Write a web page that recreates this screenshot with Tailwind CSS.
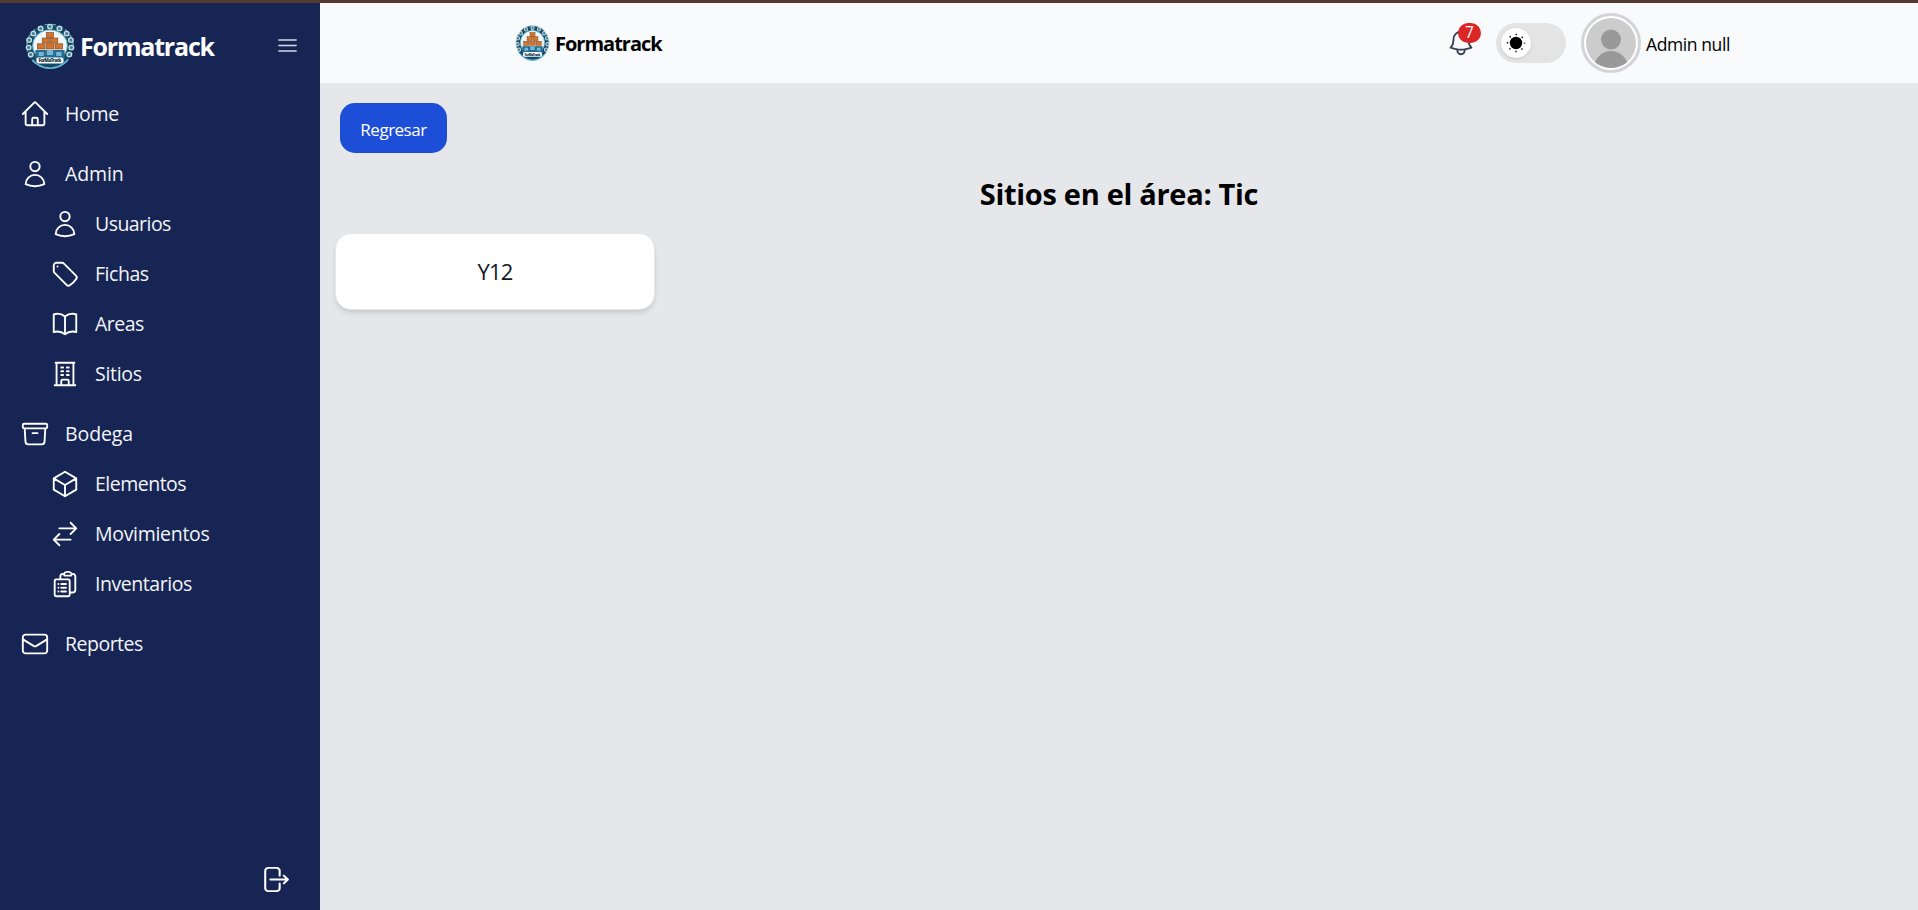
<!DOCTYPE html>
<html lang="es">
<head>
<meta charset="utf-8">
<title>Formatrack</title>
<script src="https://cdn.jsdelivr.net/npm/@tailwindcss/browser@4"></script>
</head>
<body class="h-[910px] overflow-hidden bg-[#e5e7eb] font-['Open_Sans','Noto_Sans',sans-serif] text-black">
<svg class="hidden">
  <defs>
    <symbol id="logo" viewBox="0 0 48 46" preserveAspectRatio="none">
      <ellipse cx="24" cy="23" rx="22.500" ry="22" fill="#174a61"/>
      <ellipse cx="24" cy="23" rx="22.300" ry="21.800" fill="none" stroke="#5fa9c8" stroke-width="1.200" stroke-dasharray="4 3"/>
      <g fill="#3f7d95" stroke="#c9dde3" stroke-width="1.300">
        <circle cx="24" cy="3.500" r="2.200"/><circle cx="15" cy="5.500" r="2.200"/><circle cx="33" cy="5.500" r="2.200"/>
        <circle cx="8" cy="10.500" r="2.200"/><circle cx="40" cy="10.500" r="2.200"/>
        <circle cx="4" cy="17" r="2.200"/><circle cx="44" cy="17" r="2.200"/>
        <circle cx="3.500" cy="24.500" r="2.200"/><circle cx="44.500" cy="24.500" r="2.200"/>
        <circle cx="5.500" cy="31.500" r="2.200"/><circle cx="42.500" cy="31.500" r="2.200"/>
      </g>
      <path d="M7 37q7 8.200 17 8.200T41 37" fill="none" stroke="#68bce5" stroke-width="1.500"/>
      <ellipse cx="24" cy="22.500" rx="16.500" ry="15.500" fill="#eef8fc" stroke="#78bfdb" stroke-width="1"/>
      <path d="M10 27h28v9H10z" fill="#286d91"/>
      <path d="M13 29h5v4h-5zM21 27h6v5h-6zM30 29h5v4h-5z" fill="#74b8d5"/>
      <g fill="#d0742e" stroke="#81451d" stroke-width=".6">
        <rect x="20.500" y="9.500" width="7" height="5"/>
        <rect x="16.500" y="15" width="7" height="5"/><rect x="24.500" y="15" width="7" height="5"/>
        <rect x="11.800" y="20.800" width="7.400" height="5.200"/><rect x="20.300" y="20.800" width="7.400" height="5.200"/><rect x="28.800" y="20.800" width="7.400" height="5.200"/>
      </g>
      <rect x="11" y="34.500" width="26" height="6" rx="2" fill="#fff"/>
      <text x="24" y="39.200" text-anchor="middle" textLength="22" font-family="Open Sans" font-size="4.500" font-weight="800" fill="#16364a">ForMaTrack</text>
    </symbol>
    <symbol id="user" viewBox="0 0 24 24"><path d="M15.750 6a3.750 3.750 0 1 1-7.500 0 3.750 3.750 0 0 1 7.500 0ZM4.501 20.118a7.500 7.500 0 0 1 14.998 0A17.933 17.933 0 0 1 12 21.750c-2.676 0-5.216-.584-7.499-1.632Z"/></symbol>
  </defs>
</svg>
<div class="h-[3px] bg-[#533b31]"></div>
<div class="flex h-[907px]">
  <aside class="flex w-80 shrink-0 flex-col bg-[#172554] text-white">
    <div class="flex h-[81px] items-center pt-[4px] pr-[20px] pl-[25px]">
      <svg class="h-[46px] w-[50px]"><use href="#logo"/></svg>
      <span class="ml-[5px] pt-[3px] text-[25px] font-bold tracking-[-1.2px]">Formatrack</span>
      <svg class="ml-auto size-[25px]" viewBox="0 0 24 24" fill="none" stroke="#d7dae4" stroke-width="1.500" stroke-linecap="round"><path d="M3.750 6.750h16.500M3.750 12h16.500m-16.500 5.250h16.500"/></svg>
    </div>
    <nav class="flex flex-col gap-[10px] pt-[5px] pl-5 text-[19.5px] tracking-[-0.3px] text-gray-100 [&_svg]:-mt-px [&_svg]:size-[30px] [&_svg]:shrink-0 [&_svg]:fill-none [&_svg]:stroke-white [&_svg]:stroke-[1.5] [&_a]:flex [&_a]:h-[50px] [&_a]:items-center [&_a]:gap-[15px] [&_svg]:[stroke-linecap:round] [&_svg]:[stroke-linejoin:round]">
      <a><svg viewBox="0 0 24 24"><path d="m2.250 12 8.954-8.955c.44-.439 1.152-.439 1.591 0L21.750 12M4.500 9.750v10.125c0 .621.504 1.125 1.125 1.125H9.750v-4.875c0-.621.504-1.125 1.125-1.125h2.250c.621 0 1.125.504 1.125 1.125V21h4.125c.621 0 1.125-.504 1.125-1.125V9.750M8.250 21h8.250"/></svg><span>Home</span></a>
      <div>
        <a><svg><use href="#user"/></svg><span class="tracking-[-0.1px]">Admin</span></a>
        <div class="pl-[30px]">
          <a><svg><use href="#user"/></svg><span class="tracking-[-0.55px]">Usuarios</span></a>
          <a><svg viewBox="0 0 24 24"><path d="M9.568 3H5.250A2.250 2.250 0 0 0 3 5.250v4.318c0 .597.237 1.170.659 1.591l9.581 9.581c.699.699 1.780.872 2.607.33a18.095 18.095 0 0 0 5.223-5.223c.542-.827.369-1.908-.33-2.607L11.160 3.660A2.250 2.250 0 0 0 9.568 3Z"/><path d="M6 6h.008v.008H6V6Z"/></svg><span class="tracking-[-0.45px]">Fichas</span></a>
          <a><svg viewBox="0 0 24 24"><path d="M12 6.042A8.967 8.967 0 0 0 6 3.750c-1.052 0-2.062.18-3 .512v14.250A8.987 8.987 0 0 1 6 18c2.305 0 4.408.867 6 2.292m0-14.250a8.966 8.966 0 0 1 6-2.292c1.052 0 2.062.18 3 .512v14.250A8.987 8.987 0 0 0 18 18a8.967 8.967 0 0 0-6 2.292m0-14.250v14.250"/></svg><span class="tracking-[-0.5px]">Areas</span></a>
          <a><svg viewBox="0 0 24 24"><path d="M3.750 21h16.500M4.500 3h15M5.250 3v18m13.500-18v18M9 6.750h1.500m-1.500 3h1.500m-1.500 3h1.500m3-6H15m-1.500 3H15m-1.500 3H15M9 21v-3.375c0-.621.504-1.125 1.125-1.125h3.750c.621 0 1.125.504 1.125 1.125V21"/></svg><span>Sitios</span></a>
        </div>
      </div>
      <div>
        <a><svg viewBox="0 0 24 24"><path d="m20.250 7.500-.625 10.632a2.250 2.250 0 0 1-2.247 2.118H6.622a2.250 2.250 0 0 1-2.247-2.118L3.750 7.500M10 11.250h4M3.375 7.500h17.250c.621 0 1.125-.504 1.125-1.125v-1.500c0-.621-.504-1.125-1.125-1.125H3.375c-.621 0-1.125.504-1.125 1.125v1.500c0 .621.504 1.125 1.125 1.125Z"/></svg><span class="tracking-[-0.1px]">Bodega</span></a>
        <div class="pl-[30px]">
          <a><svg viewBox="0 0 24 24"><path d="m21 7.500-9-5.250L3 7.500m18 0-9 5.250m9-5.250v9l-9 5.250M3 7.500l9 5.250M3 7.500v9l9 5.250m0-9v9"/></svg><span class="tracking-[-0.5px]">Elementos</span></a>
          <a><svg viewBox="0 0 24 24"><path d="M7.500 21 3 16.500m0 0L7.500 12M3 16.500h13.500m0-13.500L21 7.500m0 0L16.500 12M21 7.500H7.500"/></svg><span>Movimientos</span></a>
          <a><svg viewBox="0 0 24 24"><path d="M9 12h3.750M9 15h3.750M9 18h3.750m3 .75H18a2.250 2.250 0 0 0 2.250-2.250V6.108c0-1.135-.845-2.098-1.976-2.192a48.424 48.424 0 0 0-1.123-.08m-5.801 0c-.065.210-.1.433-.1.664 0 .414.336.750.750.750h4.500a.75.75 0 0 0 .750-.750 2.250 2.250 0 0 0-.1-.664m-5.800 0A2.251 2.251 0 0 1 13.500 2.250H15c1.012 0 1.867.668 2.150 1.586m-5.800 0c-.376.023-.750.050-1.124.080C9.095 4.010 8.250 4.973 8.250 6.108V8.250m0 0H4.875c-.621 0-1.125.504-1.125 1.125v11.250c0 .621.504 1.125 1.125 1.125h9.750c.621 0 1.125-.504 1.125-1.125V9.375c0-.621-.504-1.125-1.125-1.125H8.250ZM6.750 12h.008v.008H6.750V12Zm0 3h.008v.008H6.750V15Zm0 3h.008v.008H6.750V18Z"/></svg><span class="tracking-[-0.45px]">Inventarios</span></a>
        </div>
      </div>
      <a><svg viewBox="0 0 24 24"><path d="M21.750 6.750v10.500a2.250 2.250 0 0 1-2.250 2.250h-15a2.250 2.250 0 0 1-2.250-2.250V6.750m19.500 0A2.250 2.250 0 0 0 19.500 4.500h-15a2.250 2.250 0 0 0-2.250 2.250m19.500 0v.243a2.250 2.250 0 0 1-1.070 1.916l-7.500 4.615a2.250 2.250 0 0 1-2.360 0L3.320 8.910a2.250 2.250 0 0 1-1.070-1.916V6.750"/></svg><span class="tracking-[-0.5px]">Reportes</span></a>
    </nav>
    <div class="mt-auto flex justify-end pr-[29px] pb-[15px]">
      <svg class="h-[31px] w-[33px]" viewBox="0 0 24 24" preserveAspectRatio="none" fill="none" stroke="white" stroke-width="1.500" stroke-linecap="round" stroke-linejoin="round"><path d="M15.750 9V5.250A2.250 2.250 0 0 0 13.500 3h-6a2.250 2.250 0 0 0-2.250 2.250v13.500A2.250 2.250 0 0 0 7.500 21h6a2.250 2.250 0 0 0 2.250-2.250V15M18.750 15l3-3m0 0-3-3m3 3H9"/></svg>
    </div>
  </aside>
  <div class="flex min-w-0 flex-1 flex-col">
    <header class="flex h-20 items-center bg-[#f8fafc] pr-[188px] pl-[195px]">
      <svg class="h-[36px] w-[35px]"><use href="#logo"/></svg>
      <span class="ml-[5px] pt-px text-[20px] font-bold tracking-[-1px]">Formatrack</span>
      <div class="ml-auto flex items-center">
        <div class="relative size-[30px]">
          <svg class="size-[30px]" viewBox="0 0 24 24" fill="none" stroke="#374151" stroke-width="1.500" stroke-linecap="round" stroke-linejoin="round"><path d="M14.857 17.082a23.848 23.848 0 0 0 5.454-1.310A8.967 8.967 0 0 1 18 9.750V9A6 6 0 0 0 6 9v.750a8.967 8.967 0 0 1-2.312 6.022c1.733.64 3.560 1.085 5.455 1.310m5.714 0a24.255 24.255 0 0 1-5.714 0m5.714 0a3 3 0 1 1-5.714 0"/></svg>
          <span class="absolute top-[-5px] left-[12px] flex h-5 w-[23px] items-center justify-center rounded-full bg-[#dc2626] text-[15.5px] text-white">7</span>
        </div>
        <div class="ml-5 flex h-10 w-[70px] items-center rounded-full bg-[#e4e4e5] px-[5px]">
          <div class="flex size-[30px] items-center justify-center rounded-full bg-white shadow">
            <svg class="size-5" viewBox="0 0 20 20"><circle cx="10" cy="10" r="6.200"/><circle cx="10" cy="10" r="8.500" fill="none" stroke="black" stroke-width="1.500" stroke-dasharray="1.400 5.276" stroke-dashoffset=".7"/></svg>
          </div>
        </div>
        <div class="ml-[15px] size-[60px] rounded-full border-[3px] border-[#d4d4d8] bg-white p-[2px]">
          <svg class="size-full rounded-full" viewBox="0 0 50 50"><rect width="50" height="50" fill="#ccc"/><circle cx="25" cy="21.500" r="10" fill="#999"/><path d="M8 50a17 17 0 0 1 34 0z" fill="#999"/></svg>
        </div>
        <span class="ml-[5px] pt-[3px] text-[17.5px] tracking-[-0.4px]">Admin null</span>
      </div>
    </header>
    <main class="px-[15px]">
      <button class="mt-5 ml-[5px] flex h-[50px] w-[107px] items-center justify-center rounded-[15px] bg-[#1d4ed8] pt-[3px] text-[17px] tracking-[-0.5px] text-white">Regresar</button>
      <h1 class="mt-[21px] text-center text-[29px] leading-[40px] font-bold tracking-[-0.3px]">Sitios en el área: Tic</h1>
      <div class="mt-[19px] flex h-[77px] w-80 items-center justify-center rounded-[16px] border border-[#e5e7eb] bg-white text-[22px] font-medium tracking-[-0.9px] text-gray-900 shadow-md">Y12</div>
    </main>
  </div>
</div>
</body>
</html>
